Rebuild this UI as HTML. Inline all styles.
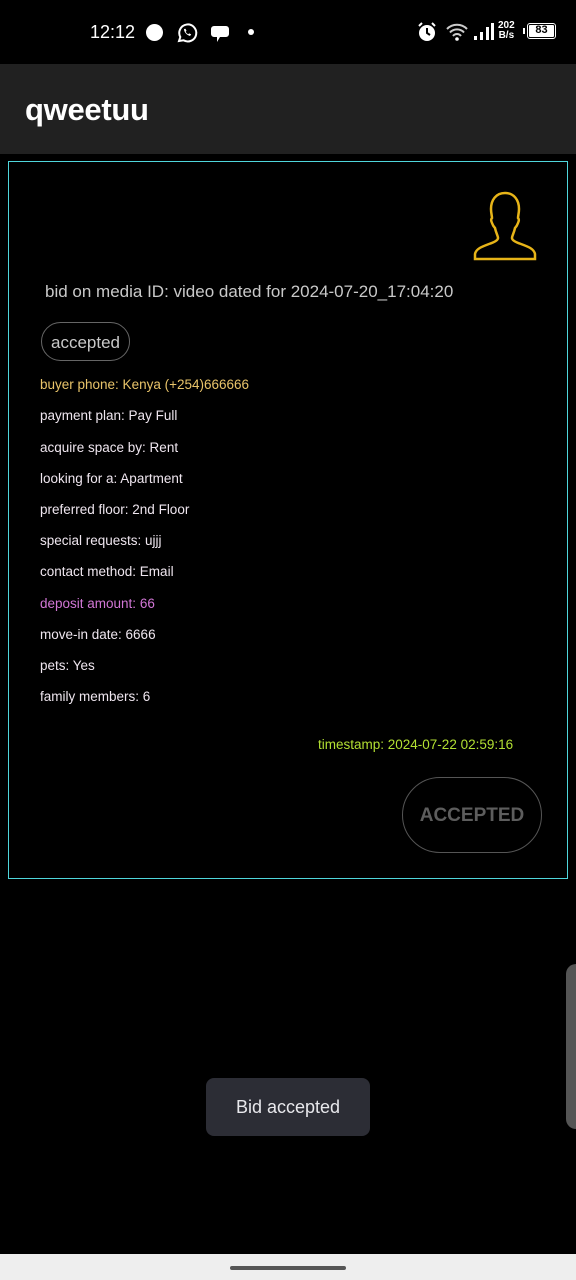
<!DOCTYPE html>
<html><head><meta charset="utf-8"><style>
*{margin:0;padding:0;box-sizing:border-box}
body{width:576px;height:1280px;background:#000;position:relative;overflow:hidden;font-family:"Liberation Sans",sans-serif;color:#fff}
.abs{position:absolute}
.line{position:absolute;left:40px;font-size:13.5px;color:#efe6ef;white-space:nowrap;line-height:16px}
</style></head><body>
<!-- status bar -->
<div class="abs" style="left:90px;top:20px;font-size:18px;color:#fff;line-height:24px">12:12</div>
<div class="abs" style="left:146px;top:24px;width:17px;height:17px;border-radius:50%;background:#fff"></div>
<svg class="abs" style="left:175px;top:21px" width="24" height="24" viewBox="0 0 24 24"><path d="M4 20l1.3-4A8.5 8.5 0 1 1 8.5 19.3Z" fill="none" stroke="#fff" stroke-width="2"/><path d="M9 8c0 3 2.5 6 6 7l1.2-1.6-2-1-1 .8c-1-.5-2-1.5-2.5-2.5l.8-1-1-2Z" fill="#fff"/></svg>
<svg class="abs" style="left:208px;top:23px" width="24" height="22" viewBox="0 0 24 22"><path d="M3 3h15a3 3 0 0 1 3 3v5a3 3 0 0 1-3 3h-6l-3 5v-5H6a3 3 0 0 1-3-3V6a3 3 0 0 1 3-3Z" fill="#fff"/></svg>
<div class="abs" style="left:248px;top:29px;width:6px;height:6px;border-radius:50%;background:#fff"></div>
<svg class="abs" style="left:417px;top:21px" width="20" height="22" viewBox="0 0 20 22"><circle cx="10" cy="12" r="8" fill="#fff"/><path d="M10 7v5l3 2" stroke="#000" stroke-width="2" fill="none"/><path d="M2 5l3-3M18 5l-3-3" stroke="#fff" stroke-width="2"/></svg>
<svg class="abs" style="left:446px;top:22px" width="22" height="20" viewBox="0 0 22 20"><path d="M1 7a14 14 0 0 1 20 0M4 10.5a9.5 9.5 0 0 1 14 0M7 14a5 5 0 0 1 8 0" stroke="#ccc" stroke-width="2" fill="none"/><circle cx="11" cy="17" r="1.8" fill="#fff"/></svg>
<svg class="abs" style="left:472px;top:22px" width="22" height="20" viewBox="0 0 22 20"><rect x="2" y="14" width="3" height="4" fill="#fff"/><rect x="8" y="10" width="3" height="8" fill="#fff"/><rect x="14" y="5" width="3" height="13" fill="#fff"/><rect x="19" y="1" width="3" height="17" fill="#fff"/></svg>
<div class="abs" style="left:498px;top:21px;font-size:10px;line-height:10px;text-align:center;color:#fff;font-weight:bold">202<br>B/s</div>
<div class="abs" style="left:523px;top:28px;width:2px;height:6px;background:#fff"></div>
<div class="abs" style="left:527px;top:23px;width:29px;height:16px;border:1.5px solid #fff;border-radius:3px;padding:1px"><div style="background:#fff;height:100%;border-radius:1px;color:#000;font-size:11px;font-weight:bold;text-align:center;line-height:11px">83</div></div>
<!-- app bar -->
<div class="abs" style="left:0;top:64px;width:576px;height:90px;background:#212121"></div>
<div class="abs" style="left:25px;top:92px;font-size:31px;font-weight:bold;color:#fff;line-height:36px;letter-spacing:-0.3px">qweetuu</div>
<!-- card -->
<div class="abs" style="left:8px;top:161px;width:560px;height:718px;border:1.5px solid #4fd6dc"></div>
<svg class="abs" style="left:470px;top:190px" width="70" height="74" viewBox="0 0 70 74"><path d="M35 3c-9 0-14 7-14 16 0 4 1 7 1 9-1 1-1 3 0 5 1 3 2 4 3 5 1 5 3 8 3 10 0 2-3 4-9 6-8 3-13 5-14 10v5h60v-5c-1-5-6-7-14-10-6-2-9-4-9-6 0-2 2-5 3-10 1-1 2-2 3-5 1-2 1-4 0-5 0-2 1-5 1-9 0-9-5-16-14-16Z" fill="none" stroke="#e7b418" stroke-width="2.5"/></svg>
<div class="abs" style="left:45px;top:282px;font-size:17px;color:#c9c9c9;line-height:20px;white-space:nowrap">bid on media ID: video dated for 2024-07-20_17:04:20</div>
<div class="abs" style="left:41px;top:322px;width:89px;height:39px;border:1.5px solid #666;border-radius:20px;font-size:17px;color:#c9c9c9;text-align:center;line-height:39px">accepted</div>
<div class="line" style="top:377px;color:#e9c46a">buyer phone: Kenya (+254)666666</div>
<div class="line" style="top:408px">payment plan: Pay Full</div>
<div class="line" style="top:440px">acquire space by: Rent</div>
<div class="line" style="top:471px">looking for a: Apartment</div>
<div class="line" style="top:502px">preferred floor: 2nd Floor</div>
<div class="line" style="top:533px">special requests: ujjj</div>
<div class="line" style="top:564px">contact method: Email</div>
<div class="line" style="top:596px;color:#d277d6">deposit amount: 66</div>
<div class="line" style="top:627px">move-in date: 6666</div>
<div class="line" style="top:658px">pets: Yes</div>
<div class="line" style="top:689px">family members: 6</div>
<div class="line" style="left:318px;top:737px;color:#b3e033">timestamp: 2024-07-22 02:59:16</div>
<div class="abs" style="left:402px;top:777px;width:140px;height:76px;border:1.5px solid #555;border-radius:38px;font-size:19px;font-weight:bold;color:#5d5d5d;text-align:center;line-height:76px">ACCEPTED</div>
<!-- side handle -->
<div class="abs" style="left:566px;top:964px;width:20px;height:165px;background:#555;border-radius:10px"></div>
<!-- toast -->
<div class="abs" style="left:206px;top:1078px;width:164px;height:58px;background:#2c2d35;border-radius:8px;font-size:18px;color:#e8e8ec;text-align:center;line-height:58px">Bid accepted</div>
<!-- nav bar -->
<div class="abs" style="left:0;top:1254px;width:576px;height:26px;background:#eeeeee"></div>
<div class="abs" style="left:230px;top:1266px;width:116px;height:4px;background:#555;border-radius:2px"></div>
</body></html>
